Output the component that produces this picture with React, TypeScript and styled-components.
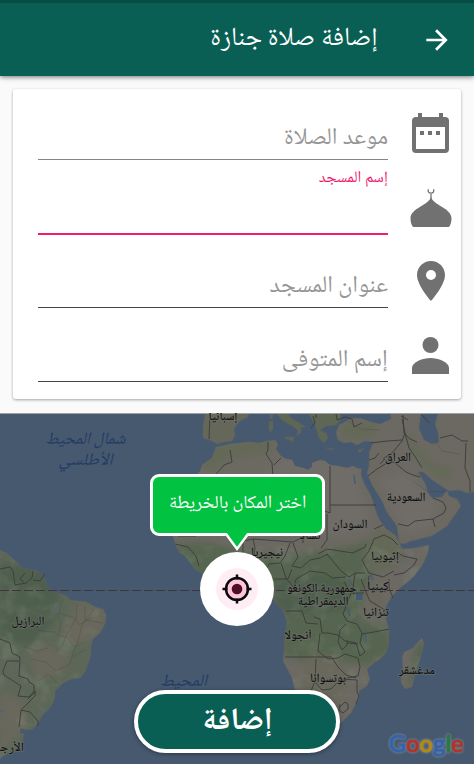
import React from "react";
import styled, { createGlobalStyle } from "styled-components";

const arabic = `"Noto Naskh Arabic UI", "Noto Naskh Arabic", "DejaVu Sans", sans-serif`;

const GlobalStyle = createGlobalStyle`
  * { box-sizing: border-box; }
  body { margin: 0; background: #fafafa; font-family: ${arabic}; }
`;

const Screen = styled.main`
  width: 474px;
  height: 764px;
  display: flex;
  flex-direction: column;
  overflow: hidden;
  direction: rtl;
  background: #fafafa;
`;

const AppBar = styled.header`
  flex: 0 0 76px;
  display: flex;
  align-items: center;
  gap: 43px;
  padding: 0 21px 0 0;
  color: #fff;
  background: #095f54;
  border-top: 3px solid #074c43;
  box-shadow: 0 1px 5px rgba(0, 0, 0, 0.55);
`;

const BackButton = styled.button`
  display: flex;
  padding: 0;
  border: 0;
  background: none;
  color: inherit;
`;

const Label = styled.span<{ $size: number; $weight?: number }>`
  font-size: ${(p) => p.$size}px;
  font-weight: ${(p) => p.$weight ?? 400};
  line-height: 1.2;
  white-space: nowrap;
`;

const Card = styled.form`
  flex: 0 0 310px;
  margin: 13px 13px 14px;
  padding: 0 8px 0 25px;
  display: grid;
  grid-template-rows: 71px 75px 73px 74px;
  background: #fff;
  border-radius: 3px;
  box-shadow: 0 1px 3px rgba(0, 0, 0, 0.35);
`;

const Row = styled.div`
  display: grid;
  grid-template-columns: 45px 1fr;
  column-gap: 20px;
`;

const IconCell = styled.div<{ $top: number }>`
  display: flex;
  justify-content: center;
  align-items: flex-start;
  padding-top: ${(p) => p.$top}px;
  color: #717171;
`;

const Field = styled.label<{ $active?: boolean; $soft?: boolean }>`
  display: flex;
  align-items: ${(p) => (p.$active ? "flex-start" : "flex-end")};
  padding: ${(p) => (p.$active ? "9px 0 0" : "0 0 6px")};
  color: ${(p) => (p.$active ? "#ef1768" : "#969696")};
  border-bottom: ${(p) => (p.$active ? "2px solid #f31c6d" : `1px solid ${p.$soft ? "#858585" : "#444"}`)};
`;

const MapPanel = styled.section`
  position: relative;
  flex: 0 0 352px;
  background: #46596f;
`;

const MapDrawing = styled.svg`
  display: block;
  width: 474px;
  height: 352px;
`;

const Wordmark = styled.div`
  position: absolute;
  left: 389px;
  top: 315px;
  direction: ltr;
  font: 500 23.5px/30px Lato, sans-serif;
  letter-spacing: 0.1px;
  filter: drop-shadow(0 0 1px #6d7c8c) drop-shadow(0 0 1px #6d7c8c);
`;

const Letter = styled.span<{ $color: string }>`
  color: ${(p) => p.$color};
  -webkit-text-stroke: 0.9px ${(p) => p.$color};
`;

const Tooltip = styled.div`
  position: absolute;
  left: 150px;
  top: 61px;
  width: 175px;
  height: 62px;
  padding-bottom: 3px;
  display: flex;
  align-items: center;
  justify-content: center;
  color: #fff;
  background: #02c241;
  border: 3px solid #fff;
  border-radius: 9px;
`;

const Pointer = styled.svg`
  position: absolute;
  left: 73px;
  top: 55px;
`;

const Target = styled.button`
  position: absolute;
  left: 200px;
  top: 139px;
  width: 74px;
  height: 74px;
  padding: 0;
  border: 0;
  border-radius: 50%;
  background: #fff;
`;

const AddButton = styled.button`
  position: absolute;
  left: 134px;
  top: 277px;
  width: 206px;
  height: 63px;
  padding: 0;
  display: flex;
  align-items: center;
  justify-content: center;
  font-family: inherit;
  color: #fff;
  background: #095f54;
  border: 4px solid #fff;
  border-radius: 32px;
  box-shadow: 0 1px 4px rgba(0, 0, 0, 0.4);
`;

const Calendar = () => (
  <svg width="37" height="41" viewBox="0 0 37 41">
    <path fill="currentColor" fillRule="evenodd" d="M6 0h4v4h17V0h4v4h2q4 0 4 4v28q0 4-4 4H4q-4 0-4-4V8q0-4 4-4h2zM4 14v22h29V14z" />
    <path fill="currentColor" d="M8 18h4v4H8zm8 0h4v4h-4zm8 0h4v4h-4z" />
  </svg>
);

const Mosque = () => (
  <svg width="42" height="40" viewBox="0 0 42 40">
    <path fill="currentColor" d="M21 9C23 17 41 20 41.500 30Q41.500 36 39 39H3Q.5 36 .5 30C1 20 19 17 21 9" />
    <path d="M21 11V6M18.400 1.200c-2 5 7 5.500 5.200 0" fill="none" stroke="currentColor" strokeWidth="1.300" />
  </svg>
);

const Pin = () => (
  <svg width="28" height="40" viewBox="5 2 14 20" preserveAspectRatio="none">
    <path fill="currentColor" d="M12 2C8.130 2 5 5.130 5 9c0 5.250 7 13 7 13s7-7.750 7-13c0-3.870-3.130-7-7-7zm0 9.500a2.500 2.500 0 1 1 0-5 2.500 2.500 0 0 1 0 5z" />
  </svg>
);

const Person = () => (
  <svg width="37" height="37" viewBox="0 0 37 37">
    <circle cx="18.500" cy="8" r="8" fill="currentColor" />
    <path fill="currentColor" d="M0 37v-6c0-6 11-10 18.500-10S37 25 37 31v6z" />
  </svg>
);

type Place = { t: string; x: number; y: number; w: number };

const countries: Place[] = [
  { t: "إسبانيا", x: 223, y: 421, w: 29 },
  { t: "العراق", x: 398, y: 462, w: 26 },
  { t: "السعودية", x: 406, y: 502, w: 39 },
  { t: "السودان", x: 350, y: 529, w: 35 },
  { t: "تشاد", x: 310, y: 540, w: 21 },
  { t: "نيجيريا", x: 267, y: 557, w: 32 },
  { t: "إثيوبيا", x: 385, y: 561, w: 28 },
  { t: "كينيا", x: 378, y: 591, w: 22 },
  { t: "جمهورية الكونغو", x: 322, y: 593, w: 70 },
  { t: "الديمقراطية", x: 323, y: 606, w: 51 },
  { t: "تنزانيا", x: 376, y: 617, w: 26 },
  { t: "أنجولا", x: 298, y: 640, w: 27 },
  { t: "بوتسوانا", x: 328, y: 683, w: 36 },
  { t: "مدغشقر", x: 417, y: 675, w: 36 },
  { t: "البرازيل", x: 28, y: 626, w: 33 },
];

const seas: Place[] = [
  { t: "شمال المحيط", x: 85, y: 445, w: 80 },
  { t: "الأطلسي", x: 85, y: 466, w: 54 },
  { t: "المحيط", x: 183, y: 687, w: 47 },
];

const AFRICA =
  "M216 446L222 445 230 443 240 442 250 441 259 442 268 440 275 439 278 443 276 448 281 455 286 458 292 459 295 465 303 467 308 469 312 466 312 462 320 459 325 460 330 464 338 465 347 467 353 465 357 467 362 468 361 473 364 482 369 491 372 497 374 504 377 513 379 518 382 522 386 528 391 531 396 535 400 543 402 548 414 547 429 544 428 552 424 561 421 566 415 574 409 580 400 587 392 595 388 602 385 608 386 617 389 628 389 643 386 652 380 658 374 662 367 668 370 678 367 685 359 690 359 697 351 712 341 722 325 737 309 738 301 720 295 690 292 677 283 660 285 637 287 620 282 607 276 603 273 597 270 588 270 577 260 571 235 574 210 577 196 569 185 555 179 551 175 543 173 535 174 520 173 506 179 492 190 480 200 470 202 464 212 457Z";
const ARABIA =
  "M373 441L369 452 369 465 367 472 372 484 382 500 386 510 397 525 399 542 404 543 411 540 432 535 447 525 455 514 461 505 457 498 449 495 447 489 442 496 432 497 428 492 425 482 420 474 418 471 423 471 431 478 441 485 449 490 459 489 467 492 474 491V412H438L435 423 438 432 439 441 432 443 424 439 419 427 421 412H390L391 418 380 423 371 421 360 417 351 417 345 421 339 424 336 432 338 439 344 442 351 441 357 444 365 440Z";
const SAMERICA =
  "M0 549L7 552 13 558 18 562 22 567 38 570 45 577 46 583 49 588 55 591 67 595 70 599 87 601 95 606 103 608 106 614 106 620 103 627 100 632 93 638 91 645 91 653 88 663 85 671 80 677 71 678 62 683 55 690 55 695 53 702 48 709 43 713 38 722 33 728 27 729 20 727 20 732 24 733 22 743 20 747 10 752 3 755 0 758Z";
const MADAGASCAR = "M422 637L424 643 420 658 416 670 412 686 405 688 401 682 401 677 403 669 402 656 404 651 413 647 417 642Z";

const Borders = () => (
  <g fill="none" stroke="#3b3b3b" strokeWidth=".9" strokeLinejoin="round">
    <path d="M210 414L209 438M230 449l2 12-8 3-8 9M268 441l0 8-2 4 6 9 1 14M281 457l-7 7M330 465v47l-8-3-19-12-2 3-16-12M330 504h46M327 513v26l-6 8M371 442l16-2 15-1M369 459l6-2 4-5M368 475l9-7 8-5 9-2 12 10 7 3 7 2M383 458l10-7 9-11 3-8-3-14M380 463l5-5M433 497l10 4 3 6-2 5-11 6-18 2-7 5-10-2M433 518l2 8M403 414l1 18 6 6 7 3M405 432l4 15 7 10 6 10M440 437l12-3 10 6 6 0M466 442l-1 25 5 13 0 11M374 528l9-4M374 538l-5 12-7 9 7 13 14 4 11-6M374 538l10-4 8 4 6 6M397 551l6 4 14 3-3 6-10 8-10 2M318 553l9-5 26 4 12-6 1-3M327 553l14 17 8 6 6-4 10 0" />
    <path d="M175 543l13 3 8 9 3 10M182 504h14v31l-18 0M196 504l17-16M218 476l4 16 23 20 29-20 29 18v32M205 535l12-5 20 2 6 6 0 29M244 540l9-2 2 9-3 22M253 538l40 3 10-5M290 542l-5 13-5 7-11 1-5 11M281 562l5 15M293 542l5 14-6 9 9 2 9-8 10-2 8-4M292 568l-4 10h-14M286 577l8 10 2-9 14-8 15 2 7 5 14-1M355 572l-2 15-5 13-5 13 4 7M361 578l7 18 2 4 15 9M369 575l-1 12 18 4M389 578l0 9 4 10M344 581l7 11 13 0M347 620l10 3 5 9-2 10 5 9-5 4-4-13-9-2 0 4-5 5-4-8 2-12 6-6M362 633l12-2 15-3M347 642l11 1M314 616l6 2 2 14 6 0 10 2 7 6h3M320 632l-2 18 10 8 10-1 7-4 13 4 2 9-2 9-11 2M286 610h16l4 12 12 1M285 656h32l15 0M316 658l-1 22-6 15-9 1M315 681l7 8 9-1 10-10 16 1 0 12 2 4-3 8M332 657l6 9 8 8 10 3M340 706l5-5 3 2 0 5-5 4-4-3 1-6" />
    <path d="M336 412l1 7 8-3 7 2 2 8 8-4M313 415l2 7-4 5M422 414l7 8M401 415l7 4M316 412l0 5" />
    <path d="M0 568l10-2 3 4 2 14 11-2 6-5 1-7M25 572l-5 6 4 3M33 579l7 1 5-7M0 638l10 4 2 10 8 4-1 19 9 3 1 3 5 3 0 6-5 6-11-1 3-10-17-11-1-4 4-10 12 0M35 690l0 5-14 14-2 17M21 709l9 2 8 9 0 5M36 690l-8 8" />
    <g opacity=".28">
      <path d="M57 612l4 9-3 13 10 3 6 9 11-5M63 598l-4 14 16 5 4 7 13-8M77 602l-1 16-9 15-5 12-6 6M85 605l0 14 18 3M94 608l-12 16-5 20M30 658l16 3 10 9 14-7 6-20M38 680l10-7 11 10M31 618l8 12 17 1M73 656l13-8M23 645l13 5 12-3" />
      <path d="M413 480l15 11 20-1M435 440l7 10 18 3M348 420l12 8 20 1M378 560l17 0 9-8M350 592l-5 14 5 10" />
    </g>
  </g>
);

const WorldMap = () => (
  <MapDrawing viewBox="0 412 474 352" aria-hidden>
    <defs>
      <clipPath id="land"><path d={AFRICA + ARABIA + SAMERICA + MADAGASCAR} /></clipPath>
      <filter id="soften"><feGaussianBlur stdDeviation="3" /></filter>
      <filter id="terrain" x="0" y="0" width="100%" height="100%">
        <feTurbulence type="fractalNoise" baseFrequency=".055" numOctaves="3" seed="5" />
        <feColorMatrix values="0 0 0 0 .27  0 0 0 0 .32  0 0 0 0 .25  0 4 0 0 -2" />
      </filter>
    </defs>
    <rect y="412" width="474" height="352" fill="#46596f" />
    <g fill="#6c6962" stroke="#5a6266" strokeWidth=".6">
      <path d={AFRICA} /><path d={ARABIA} />
      <path d={SAMERICA} fill="#5d6757" /><path d={MADAGASCAR} />
      <path fill="#656858" d="M205 412L203 425 203 437 212 440 217 443 224 441 232 440 235 435 234 427 240 420 248 416 249 412Z" />
      <path fill="#5e6654" d="M276 412l7 8 11 6 4 4-1 5 4-4 0-5 5 0-8-5-7-4-3-5zM308 412l5 8 3 7 3 10 5 5 4-5-2-5-6-3 6-4 10-1 5-6 0-6zM284 436l10 0-1 5-8-4zM269 421l4-1 0 8-3 3-1-5zM270 413l3 0-1 5-2 0zM326 447l8 1-3 1zM358 449l6-2-3 4-3 0z" />
    </g>
    <g clipPath="url(#land)">
      <g filter="url(#soften)">
        <path fill="#56654f" d="M176 542l30-1 40 9 52 4 38-7 24-4 14-7 20 3 8 20-26 8-12 25-4 27 27 6 5 24-25 16-42-7-18 5-25-11-6-60-90-7z" />
        <path fill="#636957" d="M374 532l15-4 13 25-12 15-22 6-6-20zM210 447l60-9 4 12-43 7-20 13-8-5zM340 422h35v13l-32 4zM400 425l18 20 15 18 18 3v15l-22-11-18-19z" />
        <path fill="#505f4d" d="M0 560l46 8 14 25-6 30-24 22-30-7zM270 581l45-8 33 6-4 30-38 7-31-10z" />
        <path fill="#69685b" d="M77 600l29 8-4 23-18 13-22-3 5-19zM28 648l20-3 22 11-11 17-22 6zM0 690l20 8 8 28-24 21H0zM305 655l30 0 15 21-10 24-36-2zM365 585l17 3 4 18-18-1z" />
        <path fill="#6f6c67" d="M292 448l64 16 15 64-42 6-20-13-40 10-45-22zM380 478l25-7 35 30-10 27-28 4z" />
        <path fill="#52634e" d="M420 640l6 6-11 32-8 11 7-35z" />
      </g>
      <rect y="545" width="474" height="219" filter="url(#terrain)" opacity=".2" />
    </g>
    <g fill="#445971">
      <path d="M356 592l7 1-1 6-6 0z" />
      <path d="M348 606l2 9M365 629l1 13M371 574l2 5M349 578l3 6M354 474l1 9" fill="none" stroke="#445d79" strokeWidth="1.500" />
      <path d="M43 714l3-6M0 710h4M55 610l4-6" stroke="#46638a" />
    </g>
    <Borders />
    <path d="M0 589.500H474" stroke="#40353f" strokeWidth="1" strokeDasharray="9 3" />
    <path d="M0 412.500H474" stroke="#9ca1a5" />
    <g fontFamily={arabic} textAnchor="middle" direction="rtl">
      <g fontSize="13" fontWeight="500" fill="#101213" stroke="#70716a" strokeOpacity=".6" strokeWidth="2" paintOrder="stroke">
        {countries.map((c) => (
          <text key={c.t} x={c.x} y={c.y} textLength={c.w} lengthAdjust="spacingAndGlyphs">{c.t}</text>
        ))}
        <text x="24" y="752" textAnchor="start">الأرجنتين</text>
      </g>
      <g fill="#233b64" fontStyle="italic" fontSize="17">
        {seas.map((c) => (
          <text key={c.t} x={c.x} y={c.y} textLength={c.w} lengthAdjust="spacingAndGlyphs">{c.t}</text>
        ))}
      </g>
    </g>
  </MapDrawing>
);

const wordmark: [string, string][] = [
  ["G", "#3563ae"],
  ["o", "#b03529"],
  ["o", "#b38a12"],
  ["g", "#3563ae"],
  ["l", "#257c42"],
  ["e", "#b03529"],
];

export default function App() {
  return (
    <>
      <GlobalStyle />
      <Screen>
        <AppBar>
          <BackButton aria-label="رجوع" type="button">
            <svg width="32" height="32" viewBox="0 0 24 24" fill="currentColor">
              <path d="M12 4l-1.410 1.410L16.170 11H4v2h12.170l-5.580 5.590L12 20l8-8z" />
            </svg>
          </BackButton>
          <Label $size={26.2}>إضافة صلاة جنازة</Label>
        </AppBar>
        <Card>
          <Row>
            <IconCell $top={24}><Calendar /></IconCell>
            <Field $soft><Label $size={23.8}>موعد الصلاة</Label></Field>
          </Row>
          <Row>
            <IconCell $top={28}><Mosque /></IconCell>
            <Field $active><Label $size={16}>إسم المسجد</Label></Field>
          </Row>
          <Row>
            <IconCell $top={26}><Pin /></IconCell>
            <Field><Label $size={23.8}>عنوان المسجد</Label></Field>
          </Row>
          <Row>
            <IconCell $top={29}><Person /></IconCell>
            <Field><Label $size={23.8}>إسم المتوفى</Label></Field>
          </Row>
        </Card>
        <MapPanel>
          <WorldMap />
          <Wordmark>
            {wordmark.map(([char, color], i) => (
              <Letter key={i} $color={color}>{char}</Letter>
            ))}
          </Wordmark>
          <Tooltip>
            <Label $size={18.4}>اختر المكان بالخريطة</Label>
            <Pointer width="25" height="20" viewBox="0 0 25 20">
              <path d="M0 0L11 17 22 0" fill="#02c241" />
              <path d="M0 2L11 17 22 2" fill="none" stroke="#fff" strokeWidth="2.500" />
            </Pointer>
          </Tooltip>
          <Target aria-label="تحديد المكان" type="button">
            <svg width="74" height="74" viewBox="0 0 74 74">
              <circle cx="37" cy="37" r="21" fill="#ffedf4" />
              <circle cx="37" cy="37" r="11" fill="#ffc5da" stroke="#0b0b0d" strokeWidth="2.500" />
              <circle cx="37" cy="37" r="5.300" fill="#4c1026" />
              <path d="M37 22.500v5M37 46.500v5M22.500 37h5M46.500 37h5" stroke="#0b0b0d" strokeWidth="2.500" />
            </svg>
          </Target>
          <AddButton type="button"><Label $size={31} $weight={700}>إضافة</Label></AddButton>
        </MapPanel>
      </Screen>
    </>
  );
}
